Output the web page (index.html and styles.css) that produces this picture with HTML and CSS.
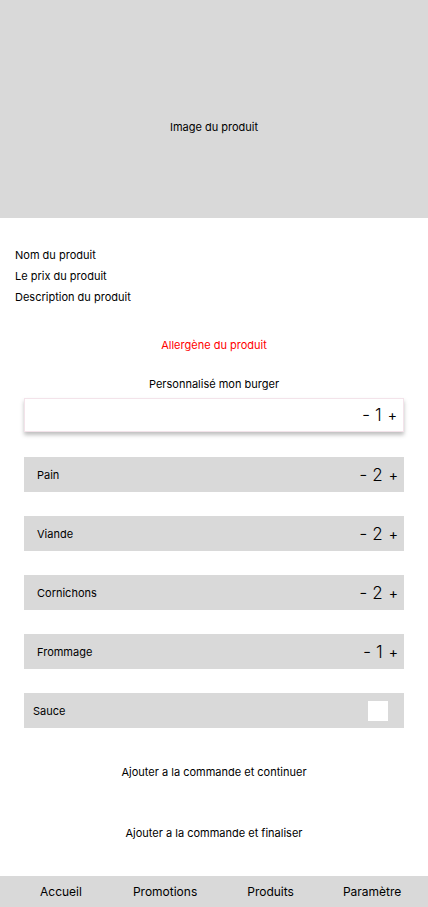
FILE: index.html
```html
<!DOCTYPE html>
<html lang="fr">
<head>
<meta charset="utf-8">
<link rel="stylesheet" href="styles.css">
</head>
<body>
<div class="page">
  <div class="hero">Image du produit</div>
  <div class="info">
    <div class="line">Nom du produit</div>
    <div class="line">Le prix du produit</div>
    <div class="line">Description du produit</div>
  </div>
  <div class="allergen">Allergène du produit</div>
  <div class="custom-title">Personnalisé mon burger</div>
  <div class="card">
    <span class="counter"><span class="op">-</span><span class="num">1</span><span class="plus">+</span></span>
  </div>
  <div class="rows">
    <div class="row"><span class="label">Pain</span><span class="counter"><span class="op">-</span><span class="num">2</span><span class="plus">+</span></span></div>
    <div class="row"><span class="label">Viande</span><span class="counter"><span class="op">-</span><span class="num">2</span><span class="plus">+</span></span></div>
    <div class="row"><span class="label">Cornichons</span><span class="counter"><span class="op">-</span><span class="num">2</span><span class="plus">+</span></span></div>
    <div class="row"><span class="label">Frommage</span><span class="counter"><span class="op">-</span><span class="num">1</span><span class="plus">+</span></span></div>
    <div class="row sauce"><span class="label">Sauce</span><span class="check"></span></div>
  </div>
  <div class="action first">Ajouter a la commande et continuer</div>
  <div class="action second">Ajouter a la commande et finaliser</div>
  <nav class="nav">
    <span class="nav-item">Accueil</span>
    <span class="nav-item">Promotions</span>
    <span class="nav-item">Produits</span>
    <span class="nav-item">Paramètre</span>
  </nav>
</div>
</body>
</html>
```

FILE: styles.css
```css
* { box-sizing: border-box; }
html, body { margin: 0; padding: 0; background: #fff; }
body {
  font-family: Inter, "Noto Sans", "Liberation Sans", sans-serif;
  color: #000;
  font-size: 11px;
}
.page { width: 428px; height: 907px; display: flex; flex-direction: column; overflow: hidden; }
.hero {
  height: 218px;
  background: #d9d9d9;
  display: flex;
  align-items: center;
  justify-content: center;
  padding-top: 35px;
  font-size: 11px;
}
.info { padding: 27px 15px 0; }
.line { line-height: 21px; }
.allergen {
  margin-top: 27px;
  line-height: 21px;
  text-align: center;
  color: #ff0000;
}
.custom-title {
  margin-top: 18px;
  line-height: 21px;
  text-align: center;
}
.card {
  margin: 3px 24px 0;
  height: 34px;
  background: #fff;
  border: 1px solid #f3e3ea;
  box-shadow: 0 3px 4px rgba(0,0,0,0.25);
  display: flex;
  align-items: center;
  justify-content: flex-end;
  padding-right: 6px;
}
.counter { display: inline-flex; align-items: baseline; gap: 5px; white-space: nowrap; line-height: 1; }
.num { font-size: 17px; font-weight: 300; }
.op { font-size: 18px; font-weight: 300; }
.plus { font-size: 14px; font-weight: 400; margin-left: 1px; position: relative; top: -1px; }
.rows {
  margin: 25px 24px 0;
  display: flex;
  flex-direction: column;
  gap: 24px;
}
.row {
  height: 35px;
  background: #d9d9d9;
  display: flex;
  align-items: center;
  justify-content: space-between;
  padding: 0 6px 0 13px;
}
.row.sauce { padding: 0 16px 0 9px; }
.check { width: 20px; height: 20px; background: #fff; }
.action {
  text-align: center;
  line-height: 21px;
  font-size: 11px;
}
.action.first { margin-top: 34px; }
.action.second { margin-top: 40px; }
.nav {
  margin-top: auto;
  height: 31px;
  background: #d9d9d9;
  display: flex;
  align-items: center;
  font-size: 12px;
}
.nav-item:nth-child(1) { margin-left: 40px; }
.nav-item:nth-child(2) { margin-left: 51px; }
.nav-item:nth-child(3) { margin-left: 50px; }
.nav-item:nth-child(4) { margin-left: 49px; }
```
